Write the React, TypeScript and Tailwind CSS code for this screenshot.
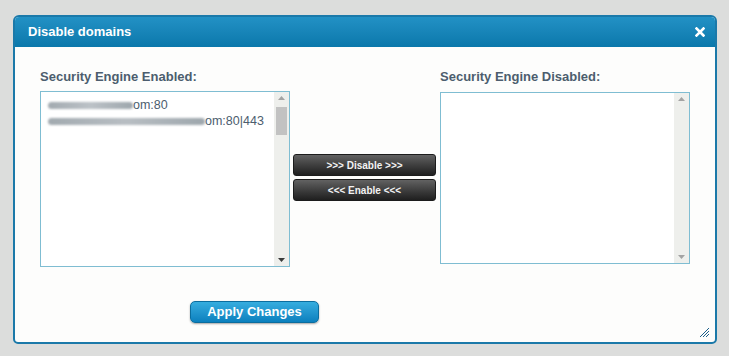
export default function App() {
  return (
    <div className="w-[729px] h-[356px] bg-[#dcdddc] pt-[15px] pl-[13px] font-['Liberation_Sans',Arial,sans-serif]">
      <div className="w-[704px] h-[329px] border-2 border-[#1b79a9] rounded-t-[6px] rounded-b-[5px] bg-[#fdfdfc] flex flex-col overflow-hidden">
        {/* title bar */}
        <div className="h-[30px] shrink-0 bg-gradient-to-b from-[#2291c5] to-[#0a78ab] flex items-center justify-between pl-[13px] pr-[10px]">
          <span className="text-white font-bold text-[13px]">Disable domains</span>
          <svg width="10" height="10" viewBox="0 0 10 10">
            <path d="M1.5 1.5 L8.5 8.5 M8.5 1.5 L1.5 8.5" stroke="#fff" strokeWidth="2.6" strokeLinecap="square" />
          </svg>
        </div>

        {/* body */}
        <div className="flex-1 flex flex-col pl-[25px] pt-[22px] relative">
          <div className="flex">
            <div className="w-[250px] flex flex-col">
              <span className="text-[13px] font-bold text-[#4c5d6e] leading-[15px]">Security Engine Enabled:</span>
              <div className="mt-[7px] h-[176px] border border-[#7fbdd2] flex bg-white">
                <div className="flex-1 pt-[5px] pl-[7px] text-[12.5px] leading-[16px] text-[#4c5d6e]">
                  {/* redacted host names */}
                  <div className="flex items-center">
                    <div className="w-[85px] h-[7px] mt-[1px] rounded-full blur-[1px] bg-gradient-to-r from-[#a2aab0] via-[#bcc2c7] to-[#9ea7ad]" />
                    <span>om:80</span>
                  </div>
                  <div className="flex items-center">
                    <div className="w-[157px] h-[7px] mt-[1px] rounded-full blur-[1px] bg-gradient-to-r from-[#a2aab0] via-[#b8bec3] to-[#9ea7ad]" />
                    <span>om:80|443</span>
                  </div>
                </div>
                <div className="w-[15px] bg-[#eeefec] flex flex-col items-center pt-[4px] pb-[4px]">
                  <svg width="7" height="4" viewBox="0 0 7 4"><path d="M0 4 L3.5 0 L7 4Z" fill="#a3a3a3" /></svg>
                  <div className="w-[11px] h-[28px] bg-[#c2c2c2] mt-[7px]" />
                  <div className="flex-1" />
                  <svg width="7" height="4" viewBox="0 0 7 4"><path d="M0 0 L3.5 4 L7 0Z" fill="#3a3a3a" /></svg>
                </div>
              </div>
            </div>

            <div className="w-[150px] flex flex-col items-start pt-[85px] pl-[3px]">
              <button className="w-[143px] h-[22px] rounded-[3px] border border-[#1c1c1c] bg-gradient-to-b from-[#626262] to-[#1f1f1f] text-[#f2f2f2] font-bold text-[10px] flex items-center justify-center">
                &gt;&gt;&gt; Disable &gt;&gt;&gt;
              </button>
              <button className="mt-[3px] w-[143px] h-[22px] rounded-[3px] border border-[#1c1c1c] bg-gradient-to-b from-[#626262] to-[#1f1f1f] text-[#f2f2f2] font-bold text-[10px] flex items-center justify-center">
                &lt;&lt;&lt; Enable &lt;&lt;&lt;
              </button>
            </div>

            <div className="w-[250px] flex flex-col">
              <span className="text-[13px] font-bold text-[#4c5d6e] leading-[15px]">Security Engine Disabled:</span>
              <div className="mt-[8px] h-[172px] border border-[#7fbdd2] flex bg-white">
                <div className="flex-1" />
                <div className="w-[15px] bg-[#eeefec] flex flex-col items-center pt-[4px] pb-[4px]">
                  <svg width="7" height="4" viewBox="0 0 7 4"><path d="M0 4 L3.5 0 L7 4Z" fill="#a3a3a3" /></svg>
                  <div className="flex-1" />
                  <svg width="7" height="4" viewBox="0 0 7 4"><path d="M0 0 L3.5 4 L7 0Z" fill="#a3a3a3" /></svg>
                </div>
              </div>
            </div>
          </div>

          <div className="pl-[150px] mt-[34px]">
            <button className="w-[129px] h-[22px] rounded-[5px] border border-[#0b6d9e] bg-gradient-to-b from-[#35addf] to-[#0a80be] text-white font-bold text-[13px] shadow-[0_1px_2px_rgba(0,0,0,0.35)] flex items-center justify-center">
              Apply Changes
            </button>
          </div>

          <svg className="absolute right-[5px] bottom-[4px]" width="11" height="11" viewBox="0 0 11 11">
            <path d="M1 10 L10 1 M4 10 L10 4 M7 10 L10 7" stroke="#1b5f8a" strokeWidth="1" />
          </svg>
        </div>
      </div>
    </div>
  );
}
